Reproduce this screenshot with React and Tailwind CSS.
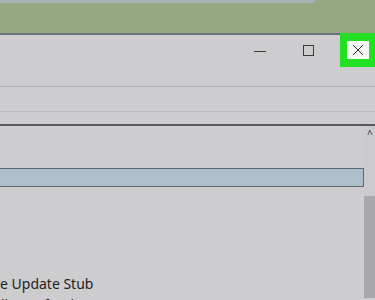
const FONT = { fontFamily: '"Noto Sans", "Open Sans", sans-serif' };

function TitleBar() {
  return (
    <div className="relative h-[52px] bg-[#cdcdcf] border-b border-[#b6b6b8]">
      <div className="absolute left-[254px] top-[16px] w-[12px] h-px bg-[#3a3a3a]" />
      <div className="absolute left-[303px] top-[10px] w-[11px] h-[11px] border border-[#3a3a3a]" />
      <div className="absolute left-[340px] -top-[2px] w-[35px] h-[34px] bg-[#24e024] flex items-center justify-center">
        <div className="w-[22px] h-[18px] bg-[#f4f7f2] flex items-center justify-center">
          <svg width="12" height="12" viewBox="0 0 12 12">
            <path d="M1 1L11 11M11 1L1 11" stroke="#333" strokeWidth="1" />
          </svg>
        </div>
      </div>
    </div>
  );
}

export default function App() {
  return (
    <div className="w-[375px] h-[300px] overflow-hidden bg-[#cdcdcf]" style={FONT}>
      <div className="flex h-[3px] bg-[#96a882]">
        <div className="w-[315px] h-[3px] bg-[#a7b1b6] rounded-br-[4px]" />
      </div>
      <div className="h-[30px] bg-[#96a882]" />
      <div className="h-[2px] bg-[#66757b]" />
      <TitleBar />
      <div className="h-[25px] border-b border-[#bcbcbe]" />
      <div className="h-[14px] border-b-2 border-[#555b5e]" />
      <div className="flex h-[172px]">
        <div className="flex-1 flex flex-col">
          <div className="h-[42px]" />
          <div className="h-[19px] bg-[#aebfcc] border-y border-r border-[#5d6a6f]" />
          <div className="flex-1 flex flex-col justify-end text-[14px] leading-[18px] text-[#1e1e1e]">
            <div className="h-[15px] translate-y-[1px]">e Update Stub</div>
            <div className="h-[3px] mt-[6px] translate-y-[1px] pl-[1px]">licrosoft Edge</div>
          </div>
        </div>
        <div className="w-[11px] flex flex-col bg-[#cbcbcd]">
          <div className="h-[16px] text-[10px] leading-[16px] text-[#333] pl-[3px]">^</div>
          <div className="h-[54px]" />
          <div className="flex-1 bg-[#a9a9ab]" />
        </div>
      </div>
    </div>
  );
}
